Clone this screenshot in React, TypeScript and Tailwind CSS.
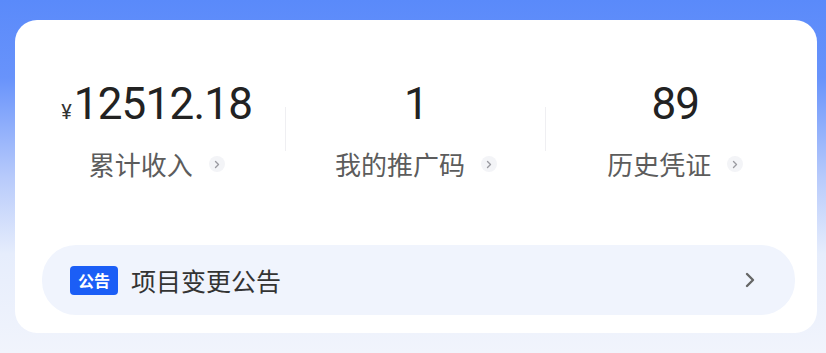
import React from "react";

const cjk = { fontFamily: '"Noto Sans CJK SC", "Noto Sans", sans-serif' };
const num = { fontFamily: 'Roboto, "Noto Sans", sans-serif' };

function Stat({ value, label, yen }: { value: string; label: string; yen?: boolean }) {
  return (
    <div className="flex flex-col items-center">
      <div className="flex items-end h-[44px] leading-none text-[#222]" style={num}>
        {yen && <span className="text-[20px] mr-[2px] mb-[4px] text-[#333]">¥</span>}
        <span className="text-[44px] font-normal leading-none tracking-[-0.8px]">{value}</span>
      </div>
      <div className="mt-[25px] flex items-center">
        <span className="text-[26px] leading-[26px] text-[#5c5c5c]" style={cjk}>{label}</span>
        <span className="ml-[16px] w-[16px] h-[16px] rounded-full bg-[#f3f4f7] flex items-center justify-center">
          <svg width="6" height="9" viewBox="0 0 6 9" fill="none">
            <path d="M1.5 1.5 L4.5 4.5 L1.5 7.5" stroke="#9a9aa0" strokeWidth="1.4" strokeLinecap="round" strokeLinejoin="round" />
          </svg>
        </span>
      </div>
    </div>
  );
}

export default function App() {
  return (
    <div className="w-[826px] h-[353px] overflow-hidden bg-[linear-gradient(180deg,#5a8afa_0%,#6893fb_22%,#b7cafb_50%,#e6edfc_72%,#f1f4fc_100%)] pt-[20px]">
      <div className="ml-[15px] w-[802px] h-[313px] bg-white rounded-[22px] pt-[62px]">
        <div className="grid grid-cols-3 px-[12px] relative">
          <div className="relative">
            <Stat value="12512.18" label="累计收入" yen />
            <div className="absolute right-0 top-[25px] h-[44px] w-px bg-[#efeff2]" />
          </div>
          <div className="relative">
            <Stat value="1" label="我的推广码" />
            <div className="absolute right-0 top-[25px] h-[44px] w-px bg-[#efeff2]" />
          </div>
          <Stat value="89" label="历史凭证" />
        </div>
        <div className="mt-[68px] ml-[27px] w-[753px] h-[70px] rounded-[34px] bg-[#f0f4fd] flex items-center pl-[28px] pr-[40px]">
          <span className="w-[48px] h-[29px] rounded-[4px] bg-[#1b5ef6] text-white text-[16px] font-bold flex items-center justify-center" style={cjk}>公告</span>
          <span className="ml-[13px] text-[25px] text-[#333] leading-none" style={cjk}>项目变更公告</span>
          <span className="flex-1" />
          <svg width="10" height="16" viewBox="0 0 10 16" fill="none">
            <path d="M2 2 L8 8 L2 14" stroke="#666" strokeWidth="2.4" strokeLinecap="round" strokeLinejoin="round" />
          </svg>
        </div>
      </div>
    </div>
  );
}
